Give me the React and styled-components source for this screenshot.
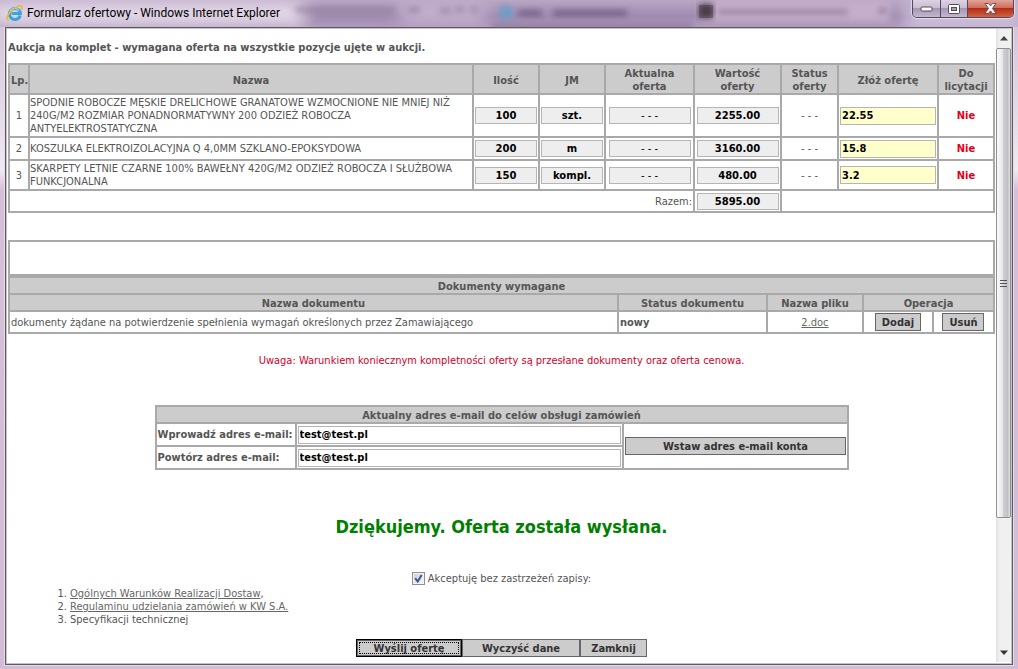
import React, { useState } from "react";
import styled, { createGlobalStyle } from "styled-components";

const GlobalStyle = createGlobalStyle`
  * {
    box-sizing: border-box;
  }
  body {
    margin: 0;
    overflow: hidden;
    color: #555;
    font-family: "DejaVu Sans Condensed", "DejaVu Sans", sans-serif;
    font-stretch: condensed;
    font-size: 11px;
    line-height: 13px;
  }
  button,
  input {
    margin: 0;
    font-family: inherit;
    font-stretch: inherit;
    font-size: 11px;
    font-weight: bold;
    line-height: 13px;
  }
`;

const Window = styled.div`
  height: 100vh;
  display: flex;
  flex-direction: column;
  padding: 0 5px 4px;
  background: linear-gradient(#cfc0d6 0, #f0e8f2 170px, #d5c0d8 190px, #d2bdd6 100%);
`;

const TitleBar = styled.header`
  position: relative;
  height: 27px;
  flex: none;
  margin: 0 -5px;
  padding: 0 4px 0 6px;
  display: flex;
  align-items: flex-start;
  overflow: hidden;
  background: linear-gradient(#b9a6c4, #a08bb0 60%, #ac9abb);

  .glass {
    position: absolute;
    left: 0;
    top: 0;
    width: 100%;
    height: 100%;
  }
  .logo {
    position: relative;
    flex: none;
    margin-top: 5px;
  }
  h1 {
    position: relative;
    flex: 1;
    margin: 4px 0 0 4px;
    color: #000;
    font-family: Roboto, sans-serif;
    font-stretch: normal;
    font-size: 12px;
    font-weight: normal;
    line-height: 18px;
  }
`;

const WindowButtons = styled.div`
  position: relative;
  display: flex;
  height: 18px;
  border: 1px solid #54485e;
  border-top: none;
  border-radius: 0 0 5px 5px;
  overflow: hidden;
  box-shadow: 0 0 1px 1px rgba(255, 255, 255, 0.5);
`;

const WindowButton = styled.button`
  width: ${(p) => (p.$close ? "46px" : "27px")};
  height: 17px;
  padding: 0;
  display: flex;
  align-items: center;
  justify-content: center;
  border: none;
  border-left: ${(p) => (p.$first ? "none" : "1px solid #54485e")};
  background: ${(p) =>
    p.$close
      ? "linear-gradient(#e0a497, #cf6f5d 45%, #b52d16 50%, #d06440)"
      : "linear-gradient(#dcd2e2, #c9bdd2 45%, #a696b3 50%, #c5b7d0)"};
`;

const Frame = styled.div`
  flex: 1;
  min-height: 0;
  display: flex;
  border: 1px solid #5e5962;
  outline: 1px solid #e6dce9;
  background: #fff;
  box-shadow: inset 0 0 0 1px #c4c4c4;
  padding: 1px 1px 2px;
`;

const Page = styled.main`
  flex: 1;
  min-width: 0;
  overflow: hidden;
  padding: 12px 1px 0;
`;

const ScrollBar = styled.aside`
  width: 15px;
  flex: none;
  display: flex;
  flex-direction: column;
  background: linear-gradient(90deg, #e0e0e0, #f0f0f0 20%, #f0f0f0);

  button {
    height: 19px;
    padding: 0;
    border: none;
    background: none;
    display: flex;
    align-items: center;
    justify-content: center;
  }
  .track {
    flex: 1;
  }
  .thumb {
    height: 79%;
    display: flex;
    align-items: center;
    justify-content: center;
    border: 1px solid #8f8f92;
    border-radius: 2px;
    background: linear-gradient(90deg, #fafafa, #e6e6e8 45%, #cfcfd3 50%, #c0c0c6 80%, #dedee2);
  }
`;

const Intro = styled.p`
  margin: 0 0 9px;
  font-weight: bold;
`;

const Grid = styled.table`
  width: ${(p) => p.$width || "100%"};
  max-width: 100%;
  margin: ${(p) => p.$margin || "0"};
  border-collapse: collapse;
  table-layout: fixed;

  th,
  td {
    border: 2px solid #a9a9a9;
    padding: 0 1px;
  }
  th {
    padding-top: 2px;
    background: #ccc;
    text-align: center;
  }
  td {
    text-align: ${(p) => p.$align || "left"};
  }
  td.name {
    padding: 0;
    text-align: left;
  }
  td.right {
    text-align: right;
  }
  td.no {
    color: #e2001a;
  }
  td.no,
  td.bold {
    font-weight: bold;
  }
  tbody th {
    padding-top: 0;
    background: #fff;
    text-align: left;
  }
`;

const Row = styled.tr`
  height: ${(p) => p.$h}px;
`;

const ReadOnly = styled.input`
  display: block;
  width: 100%;
  max-width: 82px;
  height: 17px;
  margin: 0 auto;
  padding: 0;
  border: 1px solid #b5b5b5;
  background: #eee;
  color: #000;
  text-align: center;
  font-family: "DejaVu Sans", sans-serif;
  font-stretch: normal;
  font-size: 10px;
  font-weight: ${(p) => (p.$plain ? "normal" : "bold")};
`;

const Field = styled.input`
  display: block;
  width: 100%;
  height: 18px;
  padding: 0 1px;
  border: 1px solid #b5b5b5;
  background: ${(p) => (p.$offer ? "#ffc" : "#fff")};
  color: #000;
`;

const Button = styled.button`
  width: ${(p) => p.$width || "auto"};
  height: 18px;
  padding: 0 6px;
  border: 1px solid ${(p) => (p.$default ? "#000" : "#666")};
  background: #ccc;
  color: #333;
  outline: ${(p) => (p.$default ? "1px dotted #000" : "none")};
  outline-offset: -4px;
  box-shadow: ${(p) => (p.$default ? "inset 0 0 0 1px #666" : "none")};
`;

const EmptyBox = styled.div`
  height: 36px;
  margin-top: 27px;
  border: 2px solid #a9a9a9;
`;

const Actions = styled.div`
  display: flex;
  justify-content: space-around;
`;

const Link = styled.a`
  color: #666;
  text-decoration: underline;
`;

const Warning = styled.p`
  margin: 20px 0 38px;
  color: #d4002a;
  text-align: center;
`;

const Success = styled.h2`
  margin: 46px 0 34px;
  color: #008000;
  font-size: 18px;
  line-height: 22px;
  text-align: center;
`;

const Accept = styled.label`
  display: flex;
  align-items: center;
  justify-content: center;
  gap: 3px;
  height: 13px;
  margin-bottom: 2px;

  span {
    position: relative;
    display: flex;
  }
  input {
    appearance: none;
    width: 13px;
    height: 13px;
    border: 1px solid #8e8f8f;
    background: linear-gradient(135deg, #cbcfd5, #f6f6f6);
    box-shadow: inset 0 0 0 1px #f4f4f4;
  }
  svg {
    position: absolute;
    left: 0;
    top: 0;
    pointer-events: none;
  }
`;

const Terms = styled.ol`
  margin: 0 0 13px;
  padding-left: 62px;
`;

const Footer = styled.div`
  display: flex;
  justify-content: center;
`;

const items = [
  {
    name: "SPODNIE ROBOCZE MĘSKIE DRELICHOWE GRANATOWE WZMOCNIONE NIE MNIEJ NIŻ 240G/M2 ROZMIAR PONADNORMATYWNY 200 ODZIEŻ ROBOCZA ANTYELEKTROSTATYCZNA",
    count: "100",
    unit: "szt.",
    value: "2255.00",
    offer: "22.55",
    height: 43,
  },
  {
    name: "KOSZULKA ELEKTROIZOLACYJNA Q 4,0MM SZKLANO-EPOKSYDOWA",
    count: "200",
    unit: "m",
    value: "3160.00",
    offer: "15.8",
    height: 23,
  },
  {
    name: "SKARPETY LETNIE CZARNE 100% BAWEŁNY 420G/M2 ODZIEŻ ROBOCZA I SŁUŻBOWA FUNKCJONALNA",
    count: "150",
    unit: "kompl.",
    value: "480.00",
    offer: "3.2",
    height: 30,
  },
];

const Glass = () => (
  <svg className="glass" viewBox="0 0 1018 27" preserveAspectRatio="none" aria-hidden="true">
    <defs>
      <filter id="soft" x="-20%" y="-100%" width="140%" height="300%">
        <feGaussianBlur stdDeviation="3" />
      </filter>
      <filter id="haze" x="-20%" y="-100%" width="140%" height="300%">
        <feGaussianBlur stdDeviation="8" />
      </filter>
    </defs>
    <g filter="url(#haze)">
      <rect x="-10" y="2" width="315" height="24" fill="#e6dcea" />
      <rect x="400" y="3" width="85" height="20" fill="#c8b4d2" />
      <rect x="905" y="-5" width="120" height="40" fill="#c9bbd6" />
    </g>
    <g filter="url(#soft)">
      <rect x="700" y="0" width="190" height="22" fill="#c5aecb" />
      <rect x="492" y="24" width="200" height="5" fill="#8b779d" />
      <path d="M295 10h100M408 10h12M440 11h10M455 10h9M470 10h8" stroke="#8d7d98" strokeWidth="4" />
      <circle cx="506" cy="12" r="7" fill="#6a9fc8" />
      <path d="M518 13h24M553 13h74" stroke="#68577a" strokeWidth="5" />
      <path d="M718 12h130" stroke="#907d9b" strokeWidth="5" />
      <path d="M879 11h7" stroke="#7b6886" strokeWidth="5" />
    </g>
    <rect x="699" y="4" width="14" height="14" fill="#493746" filter="url(#soft)" />
    <rect x="699" y="5" width="14" height="13" fill="#4a3a4a" opacity=".5" />
  </svg>
);

const ExplorerLogo = () => (
  <svg className="logo" width="17" height="16" viewBox="0 0 17 16" aria-hidden="true">
    <path d="M14.2 10.5A5.5 5.5 0 1 1 14.4 8.6H5.6" fill="none" stroke="#3ba3e0" strokeWidth="3" />
    <path d="M3.7 6.6A5.4 5.4 0 0 1 13 5.6" fill="none" stroke="#8fdafa" strokeWidth="1.2" />
    <path d="M3 14.8C-.4 15.2.6 10.8 4.4 6.9 8.5 2.5 14-.2 15.6 1.2c.8.8.4 2.4-.5 4" fill="none" stroke="#efb92c" strokeWidth="1.6" />
  </svg>
);

const App = () => {
  const [offers, setOffers] = useState(items.map((item) => item.offer));
  const [email, setEmail] = useState("test@test.pl");
  const [repeat, setRepeat] = useState("test@test.pl");
  const [accepted, setAccepted] = useState(true);

  const changeOffer = (index, value) => {
    setOffers(offers.map((offer, i) => (i === index ? value : offer)));
  };

  return (
    <>
      <GlobalStyle />
      <Window>
        <TitleBar>
          <Glass />
          <ExplorerLogo />
          <h1>Formularz ofertowy - Windows Internet Explorer</h1>
          <WindowButtons>
            <WindowButton $first aria-label="Minimalizuj">
              <svg width="13" height="6" viewBox="0 0 13 6">
                <rect x="1" y="1" width="11" height="4" rx="1" fill="#fff" stroke="#544c60" />
              </svg>
            </WindowButton>
            <WindowButton aria-label="Maksymalizuj">
              <svg width="12" height="10" viewBox="0 0 12 10">
                <rect x=".5" y=".5" width="11" height="9" rx="1" fill="#fff" stroke="#544c60" />
                <rect x="3.5" y="3.5" width="5" height="3" fill="#a99ab5" stroke="#544c60" />
              </svg>
            </WindowButton>
            <WindowButton $close aria-label="Zamknij okno">
              <svg width="13" height="11" viewBox="0 0 13 11">
                <path d="M1 .5h3.4l2.1 2.4L8.6.5H12L8.4 5.4l3.8 5.1H8.7L6.5 7.9l-2.2 2.6H.8l3.8-5.1z" fill="#fff" stroke="#5b4452" strokeWidth=".9" />
              </svg>
            </WindowButton>
          </WindowButtons>
        </TitleBar>

        <Frame>
          <Page>
            <Intro>Aukcja na komplet - wymagana oferta na wszystkie pozycje ujęte w aukcji.</Intro>

            <Grid $align="center">
              <colgroup>
                <col width="20" />
                <col />
                <col width="66" />
                <col width="66" />
                <col width="89" />
                <col width="87" />
                <col width="57" />
                <col width="100" />
                <col width="56" />
              </colgroup>
              <thead>
                <Row $h={30}>
                  <th>Lp.</th>
                  <th>Nazwa</th>
                  <th>Ilość</th>
                  <th>JM</th>
                  <th>Aktualna oferta</th>
                  <th>
                    Wartość
                    <br />
                    oferty
                  </th>
                  <th>Status oferty</th>
                  <th>Złóż ofertę</th>
                  <th>Do licytacji</th>
                </Row>
              </thead>
              <tbody>
                {items.map((item, index) => (
                  <Row key={item.name} $h={item.height}>
                    <td>{index + 1}</td>
                    <td className="name">{item.name}</td>
                    <td>
                      <ReadOnly readOnly aria-label="Ilość" value={item.count} />
                    </td>
                    <td>
                      <ReadOnly readOnly aria-label="JM" value={item.unit} />
                    </td>
                    <td>
                      <ReadOnly readOnly $plain aria-label="Aktualna oferta" value="- - -" />
                    </td>
                    <td>
                      <ReadOnly readOnly aria-label="Wartość oferty" value={item.value} />
                    </td>
                    <td>- - -</td>
                    <td>
                      <Field $offer aria-label="Złóż ofertę" value={offers[index]} onChange={(e) => changeOffer(index, e.target.value)} />
                    </td>
                    <td className="no">Nie</td>
                  </Row>
                ))}
                <Row $h={22}>
                  <td colSpan="5" className="right">
                    Razem:
                  </td>
                  <td>
                    <ReadOnly readOnly aria-label="Razem" value="5895.00" />
                  </td>
                  <td colSpan="3" />
                </Row>
              </tbody>
            </Grid>

            <EmptyBox />
            <Grid>
              <colgroup>
                <col />
                <col width="149" />
                <col width="96" />
                <col width="70" />
                <col width="61" />
              </colgroup>
              <thead>
                <Row $h={17}>
                  <th colSpan="5">Dokumenty wymagane</th>
                </Row>
                <Row $h={17}>
                  <th>Nazwa dokumentu</th>
                  <th>Status dokumentu</th>
                  <th>Nazwa pliku</th>
                  <th colSpan="2">Operacja</th>
                </Row>
              </thead>
              <tbody>
                <Row $h={22}>
                  <td>dokumenty żądane na potwierdzenie spełnienia wymagań określonych przez Zamawiającego</td>
                  <td className="bold">nowy</td>
                  <td>
                    <Actions>
                      <Link href="#plik">2.doc</Link>
                    </Actions>
                  </td>
                  <td>
                    <Actions>
                      <Button>Dodaj</Button>
                    </Actions>
                  </td>
                  <td>
                    <Actions>
                      <Button>Usuń</Button>
                    </Actions>
                  </td>
                </Row>
              </tbody>
            </Grid>

            <Warning>Uwaga: Warunkiem koniecznym kompletności oferty są przesłane dokumenty oraz oferta cenowa.</Warning>

            <Grid $width="694px" $margin="0 auto">
              <colgroup>
                <col width="140" />
                <col />
                <col width="224" />
              </colgroup>
              <thead>
                <Row $h={17}>
                  <th colSpan="3">Aktualny adres e-mail do celów obsługi zamówień</th>
                </Row>
              </thead>
              <tbody>
                <Row $h={23}>
                  <th>
                    <label htmlFor="email">Wprowadź adres e-mail:</label>
                  </th>
                  <td>
                    <Field id="email" value={email} onChange={(e) => setEmail(e.target.value)} />
                  </td>
                  <td rowSpan="2">
                    <Button $width="100%">Wstaw adres e-mail konta</Button>
                  </td>
                </Row>
                <Row $h={23}>
                  <th>
                    <label htmlFor="repeat">Powtórz adres e-mail:</label>
                  </th>
                  <td>
                    <Field id="repeat" value={repeat} onChange={(e) => setRepeat(e.target.value)} />
                  </td>
                </Row>
              </tbody>
            </Grid>

            <Success>Dziękujemy. Oferta została wysłana.</Success>

            <Accept>
              <span>
                <input type="checkbox" checked={accepted} onChange={(e) => setAccepted(e.target.checked)} />
                {accepted && (
                  <svg width="13" height="13" viewBox="0 0 13 13" aria-hidden="true">
                    <path d="M3.2 6.2l2.5 3.3L9.6 3" fill="none" stroke="#3a5696" strokeWidth="2" />
                  </svg>
                )}
              </span>
              Akceptuję bez zastrzeżeń zapisy:
            </Accept>
            <Terms>
              <li>
                <Link href="#warunki">Ogólnych Warunków Realizacji Dostaw</Link>,
              </li>
              <li>
                <Link href="#regulamin">Regulaminu udzielania zamówień w KW S.A.</Link>
              </li>
              <li>Specyfikacji technicznej</li>
            </Terms>

            <Footer>
              <Button $default $width="106px">
                Wyślij ofertę
              </Button>
              <Button $width="118px">Wyczyść dane</Button>
              <Button $width="67px">Zamknij</Button>
            </Footer>
          </Page>

          <ScrollBar>
            <button aria-label="Przewiń w górę">
              <svg width="8" height="5" viewBox="0 0 8 5">
                <path d="M4 0l4 4.5H0z" fill="#444" />
              </svg>
            </button>
            <div className="track">
              <div className="thumb">
                <svg width="7" height="9" viewBox="0 0 7 9">
                  <path d="M0 1.5h7M0 4.5h7M0 7.5h7" stroke="#55555a" />
                </svg>
              </div>
            </div>
            <button aria-label="Przewiń w dół">
              <svg width="8" height="5" viewBox="0 0 8 5">
                <path d="M4 5L0 .5h8z" fill="#333" />
              </svg>
            </button>
          </ScrollBar>
        </Frame>
      </Window>
    </>
  );
};

export default App;
